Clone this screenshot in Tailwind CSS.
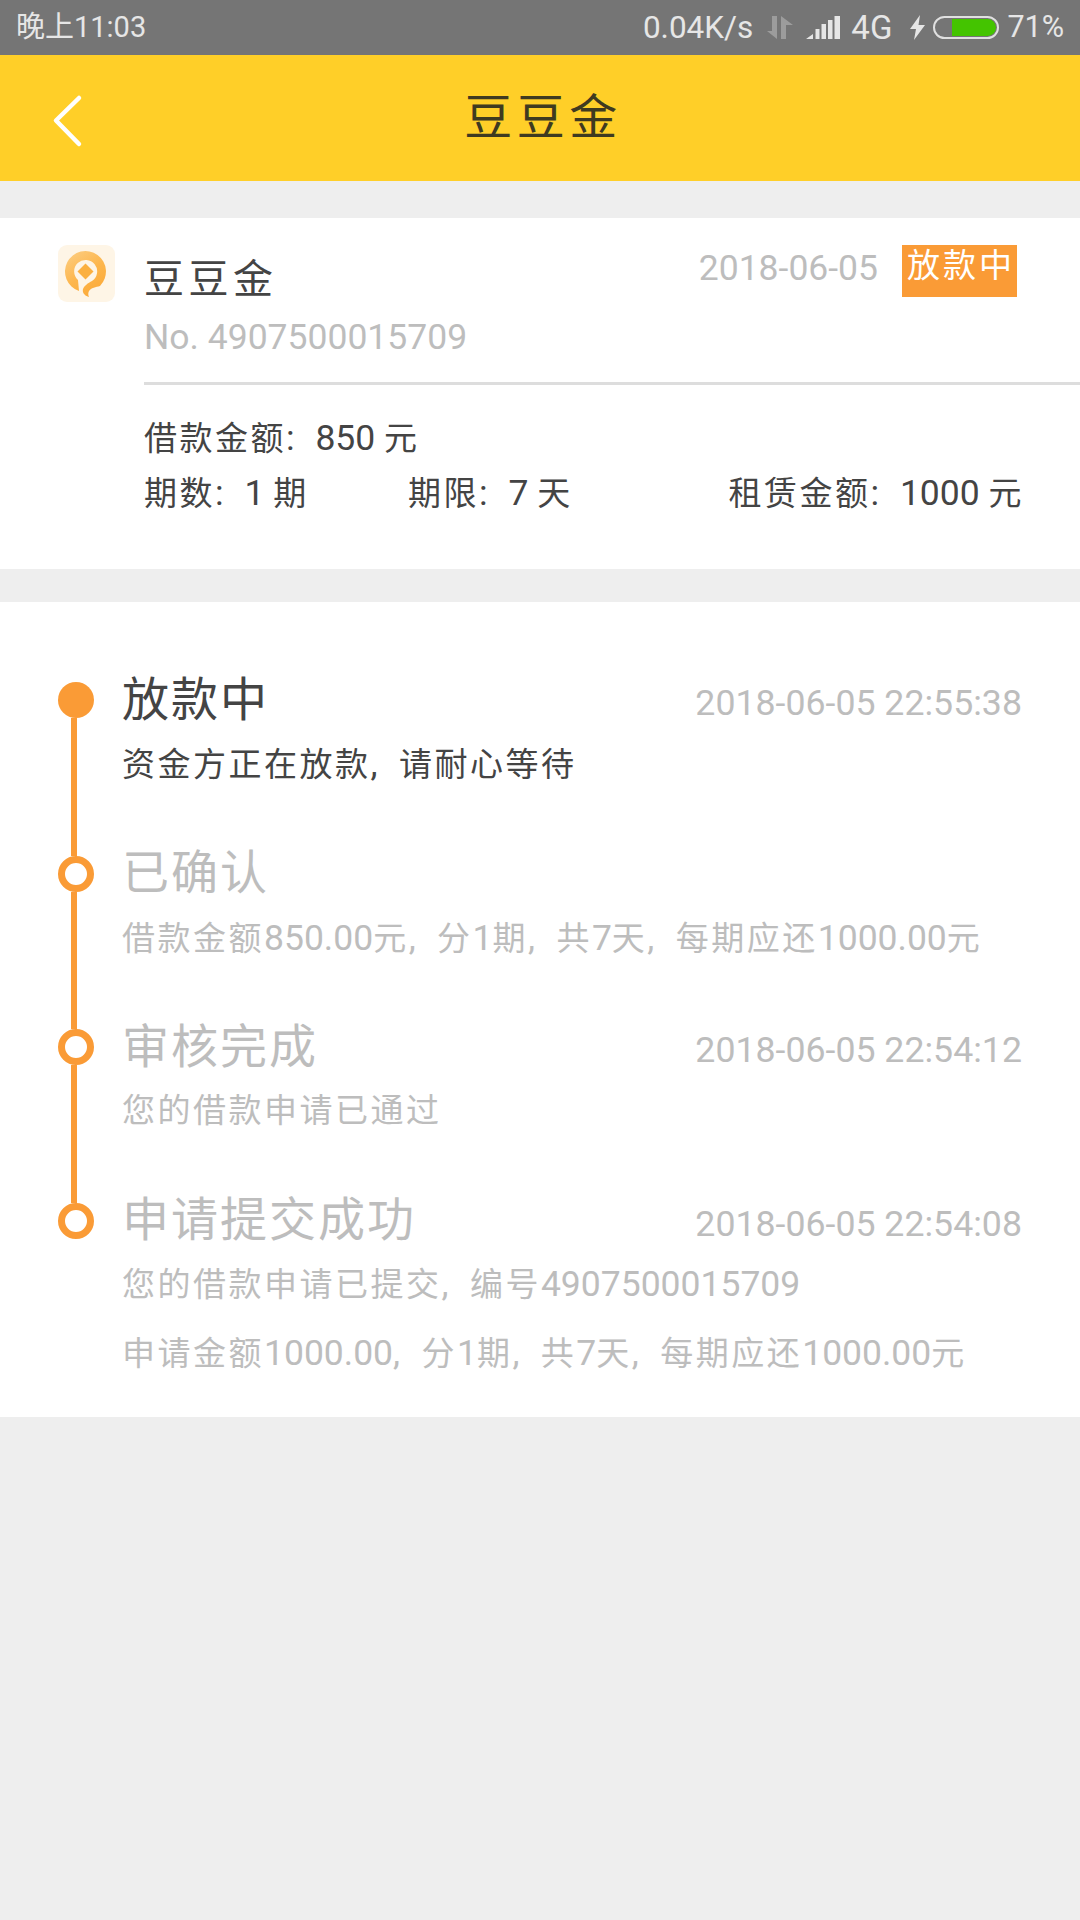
<!DOCTYPE html>
<html lang="zh"><head><meta charset="utf-8">
<script src="https://cdn.jsdelivr.net/npm/@tailwindcss/browser@4"></script>
</head>
<body class="m-0 bg-[#eeeeee]">
<div class="w-[1080px] h-[1920px] bg-[#eeeeee] overflow-hidden font-['Roboto','Noto_Sans_CJK_SC',sans-serif] text-[#444444]">
  <div class="h-[55px] bg-[#757575] flex items-center justify-between pl-[16px] pr-[16px] text-[#e6e6e6]">
    <span class="text-[29px]">晚上11:03</span>
    <div class="flex items-center text-[31.500px] leading-none">
      <span>0.04K/s</span>
      <svg class="ml-[14px]" width="26" height="23" viewBox="0 0 26 23"><path d="M5 0h5v23L0 15h5zM14 23V0l12 9h-7v14z" fill="#9c9c9c"/></svg>
      <svg class="ml-[13px]" width="34" height="23" viewBox="0 0 34 23"><path d="M0 23L7 18v5zM9.500 23V13h4v10zM15.500 23V8h4.500v15zM22 23V4h4.500v19zM28.500 23V0h5.500v23z" fill="#e6e6e6"/></svg>
      <span class="ml-[11px] text-[33px]">4G</span>
      <svg class="ml-[18px]" width="15" height="25" viewBox="0 0 15 25"><path d="M10 0L0 14h6l-2 11 11-15H8.500z" fill="#e6e6e6"/></svg>
      <div class="ml-[8px] w-[66px] h-[23px] rounded-full border-2 border-[#e0e0e0] pr-[1px] flex justify-end items-center"><div class="w-[44px] h-[17px] bg-[#44c400] rounded-r-full"></div></div>
      <span class="ml-[8px] text-[30.500px]">71%</span>
    </div>
  </div>
  <div class="h-[126px] bg-[#ffcf28] relative flex items-center justify-center pl-[6px]">
    <svg class="absolute left-[52px] top-[39px]" width="32" height="54" viewBox="0 0 32 54" fill="none" stroke="#fff" stroke-width="4.500" stroke-linecap="round" stroke-linejoin="round"><path d="M27 4L4 26.500 27 50"/></svg>
    <span class="text-[48px] tracking-[4.500px] leading-none text-[#3f3a20]">豆豆金</span>
  </div>
  <div class="mt-[37px] h-[351px] bg-white pl-[58px] pt-[27px] flex">
    <div class="w-[57px] h-[57px] rounded-[9px] bg-[#fef5e6] shrink-0">
      <svg width="57" height="57" viewBox="0 0 57 57"><defs><linearGradient id="g" x1="0.200" y1="0" x2="0.800" y2="1"><stop offset="0" stop-color="#fccb7d"/><stop offset="0.500" stop-color="#fdb64c"/><stop offset="1" stop-color="#fba937"/></linearGradient></defs><path d="M21 46A20.500 20.500 0 1 1 42 41C38 42 33 43 31 46C30 48 30 50 31 52C27 51 24 48 25 44C26 41 30 38 34 36A11.500 11.500 0 1 0 20 35Z" fill="url(#g)"/><path d="M27.500 18.500l8 8-8 8-8-8z" fill="#fbb040"/></svg>
    </div>
    <div class="ml-[29px] flex-1 min-w-0">
      <div class="flex justify-between pr-[63px]">
        <div class="text-[40px] leading-[58px] tracking-[4.500px] mt-[6px]">豆豆金</div>
        <div class="flex items-start">
          <span class="text-[35.500px] text-[#bdbdbd] leading-[46px]">2018-06-05</span>
          <span class="ml-[24px] w-[115px] h-[52px] pl-[3px] bg-[#fa9b36] text-white text-[33px] tracking-[3px] leading-[42px] text-center">放款中</span>
        </div>
      </div>
      <div class="text-[35.500px] text-[#bdbdbd] leading-[40px] mt-[8px]">No. 4907500015709</div>
      <div class="h-[3px] bg-[#dddddd] mt-[25px]"></div>
      <div class="text-[33px] tracking-[2.500px] leading-[55px] mt-[26px] pr-[56px]">
        <div>借款金额<span class="text-[35.500px] tracking-[6px]">: </span><span class="text-[35.500px] tracking-normal">850 </span>元</div>
        <div class="flex"><span class="w-[264px]">期数<span class="text-[35.500px] tracking-[6px]">: </span><span class="text-[35.500px] tracking-normal">1 </span>期</span><span class="flex-1">期限<span class="text-[35.500px] tracking-[6px]">: </span><span class="text-[35.500px] tracking-normal">7 </span>天</span><span>租赁金额<span class="text-[35.500px] tracking-[6px]">: </span><span class="text-[35.500px] tracking-normal">1000 </span>元</span></div>
      </div>
    </div>
  </div>
  <div class="mt-[33px] h-[815px] bg-white pt-[80px] pl-[58px] pr-[58px]">
    <div class="flex h-[173.500px]">
      <div class="w-[36px] flex flex-col shrink-0"><div class="w-[36px] h-[36px] rounded-full bg-[#fa9b36] shrink-0"></div><div class="ml-[13px] w-[6px] flex-1 bg-[#fa9b36]"></div></div>
      <div class="ml-[28px] flex-1">
        <div class="flex justify-between items-center h-[36px]"><span class="text-[47px] tracking-[2px]">放款中</span><span class="text-[35.700px] text-[#bdbdbd] mt-[8px]">2018-06-05 22:55:38</span></div>
        <div class="text-[33px] tracking-[2.500px] leading-[40px] mt-[26px]">资金方正在放款<span class="text-[35.500px] tracking-[6.300px]">, </span>请耐心等待</div>
      </div>
    </div>
    <div class="flex h-[173.500px]">
      <div class="w-[36px] flex flex-col shrink-0"><div class="w-[36px] h-[36px] rounded-full border-[7px] border-[#fa9b36] bg-white shrink-0"></div><div class="ml-[13px] w-[6px] flex-1 bg-[#fa9b36]"></div></div>
      <div class="ml-[28px] flex-1 text-[#bdbdbd]">
        <div class="flex justify-between items-center h-[36px]"><span class="text-[47px] tracking-[2px]">已确认</span></div>
        <div class="text-[33px] tracking-[2.500px] leading-[40px] mt-[26px]">借款金额<span class="text-[35.500px] tracking-normal">850.00</span>元<span class="text-[35.500px] tracking-[6.300px]">, </span>分<span class="text-[35.500px] tracking-normal">1</span>期<span class="text-[35.500px] tracking-[6.300px]">, </span>共<span class="text-[35.500px] tracking-normal">7</span>天<span class="text-[35.500px] tracking-[6.300px]">, </span>每期应还<span class="text-[35.500px] tracking-normal">1000.00</span>元</div>
      </div>
    </div>
    <div class="flex h-[173.500px]">
      <div class="w-[36px] flex flex-col shrink-0"><div class="w-[36px] h-[36px] rounded-full border-[7px] border-[#fa9b36] bg-white shrink-0"></div><div class="ml-[13px] w-[6px] flex-1 bg-[#fa9b36]"></div></div>
      <div class="ml-[28px] flex-1 text-[#bdbdbd]">
        <div class="flex justify-between items-center h-[36px]"><span class="text-[47px] tracking-[2px]">审核完成</span><span class="text-[35.700px] mt-[8px]">2018-06-05 22:54:12</span></div>
        <div class="text-[33px] tracking-[2.500px] leading-[40px] mt-[26px]">您的借款申请已通过</div>
      </div>
    </div>
    <div class="flex">
      <div class="w-[36px] shrink-0"><div class="w-[36px] h-[36px] rounded-full border-[7px] border-[#fa9b36] bg-white"></div></div>
      <div class="ml-[28px] flex-1 text-[#bdbdbd]">
        <div class="flex justify-between items-center h-[36px]"><span class="text-[47px] tracking-[2px]">申请提交成功</span><span class="text-[35.700px] mt-[8px]">2018-06-05 22:54:08</span></div>
        <div class="text-[33px] tracking-[2.500px] leading-[40px] mt-[25px]">您的借款申请已提交<span class="text-[35.500px] tracking-[6.300px]">, </span>编号<span class="text-[35.500px] tracking-normal">4907500015709</span></div>
        <div class="text-[33px] tracking-[2.500px] leading-[40px] mt-[28px]">申请金额<span class="text-[35.500px] tracking-normal">1000.00</span><span class="text-[35.500px] tracking-[6.300px]">, </span>分<span class="text-[35.500px] tracking-normal">1</span>期<span class="text-[35.500px] tracking-[6.300px]">, </span>共<span class="text-[35.500px] tracking-normal">7</span>天<span class="text-[35.500px] tracking-[6.300px]">, </span>每期应还<span class="text-[35.500px] tracking-normal">1000.00</span>元</div>
      </div>
    </div>
  </div>
</div>
</body></html>
